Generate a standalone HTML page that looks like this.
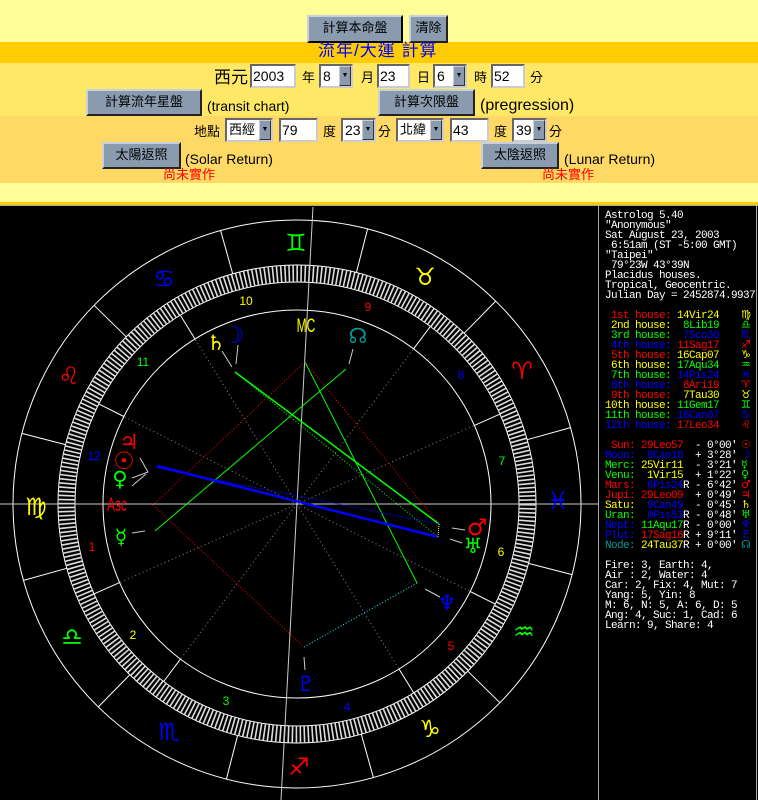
<!DOCTYPE html>
<html><head><meta charset="utf-8">
<style>
*{margin:0;padding:0;box-sizing:border-box}
body{width:758px;height:800px;overflow:hidden;background:#000;position:relative;font-family:"Liberation Sans","Noto Sans CJK TC",sans-serif;font-size:13px;color:#000}
.a{position:absolute}
.btn{position:absolute;background:#8a9bb0;border:2px solid;border-color:#c8d0dc #222 #222 #c8d0dc;font-size:13px;text-align:center;color:#000}
.inp{position:absolute;background:#fff;border:2px solid;border-color:#666 #ccc #ccc #666;font-size:14px;padding-left:1px;line-height:20px;height:24px}
.sel{position:absolute;background:#fff;border:2px solid;border-color:#666 #ccc #ccc #666;font-size:14px;padding-left:2px;line-height:20px;height:24px}
.sel b{position:absolute;right:0;top:0;width:12px;height:20px;background:#8a9bb0;border:1px solid;border-color:#ccc #333 #333 #ccc;font-size:7px;line-height:18px;text-align:center;font-weight:normal}
.t{position:absolute;font-size:13px;line-height:16px}
#panel{position:absolute;left:598px;top:206px;width:159px;height:594px;background:#000;border-left:1px solid #aaa;border-right:1px solid #aaa;font-family:"Liberation Mono","DejaVu Sans Mono",monospace;font-size:11px;letter-spacing:-0.6px;line-height:10px;color:#fff}
#panel div{position:relative;height:10px;white-space:pre}
#panel i{font-style:normal;position:absolute;left:142px;top:-1px;font-family:"DejaVu Sans",sans-serif;font-size:11px;letter-spacing:0}
.r{color:#f00}.y{color:#ff0}.g{color:#0f0}.b{color:#0000ff}.c{color:#009999}.w{color:#fff}
</style></head><body>
<div class="a" style="left:0;top:0;width:758px;height:42px;background:#ffff99"></div>
<div class="a" style="left:0;top:42px;width:758px;height:21px;background:#ffcc00"></div>
<div class="a" style="left:0;top:63px;width:758px;height:53px;background:#ffe866"></div>
<div class="a" style="left:0;top:116px;width:758px;height:67px;background:#ffd966"></div>
<div class="a" style="left:0;top:183px;width:758px;height:19px;background:#ffff99"></div>
<div class="a" style="left:0;top:202px;width:758px;height:3px;background:#ffcc00"></div>
<div class="a" style="left:0;top:205px;width:758px;height:1px;background:#aaa"></div>

<div class="btn" style="left:307px;top:15px;width:96px;height:28px;line-height:22px;border-color:#c8d0dc #000 #000 #c8d0dc">計算本命盤</div>
<div class="btn" style="left:409px;top:15px;width:39px;height:28px;line-height:22px">清除</div>
<div class="t" style="left:318px;top:41px;font-size:17px;line-height:20px;letter-spacing:1px;color:#0000ff">流年/大運 計算</div>

<div class="t" style="left:214px;top:67px;font-size:17px;line-height:22px">西元</div>
<div class="inp" style="left:250px;top:64px;width:46px">2003</div>
<div class="t" style="left:302px;top:70px">年</div>
<div class="sel" style="left:319px;top:64px;width:34px">8<b>▼</b></div>
<div class="t" style="left:361px;top:70px">月</div>
<div class="inp" style="left:377px;top:64px;width:33px">23</div>
<div class="t" style="left:417px;top:70px">日</div>
<div class="sel" style="left:433px;top:64px;width:34px">6<b>▼</b></div>
<div class="t" style="left:474px;top:70px">時</div>
<div class="inp" style="left:491px;top:64px;width:34px">52</div>
<div class="t" style="left:530px;top:70px">分</div>

<div class="btn" style="left:86px;top:89px;width:116px;height:27px;line-height:21px">計算流年星盤</div>
<div class="t" style="left:207px;top:98px;font-size:14px">(transit chart)</div>
<div class="btn" style="left:378px;top:89px;width:97px;height:27px;line-height:21px">計算次限盤</div>
<div class="t" style="left:480px;top:96px;font-size:16px;line-height:19px">(pregression)</div>

<div class="t" style="left:194px;top:124px">地點</div>
<div class="sel" style="left:225px;top:118px;width:48px;font-size:13px">西經<b>▼</b></div>
<div class="inp" style="left:279px;top:118px;width:39px">79</div>
<div class="t" style="left:323px;top:124px">度</div>
<div class="sel" style="left:341px;top:118px;width:35px">23<b>▼</b></div>
<div class="t" style="left:378px;top:124px">分</div>
<div class="sel" style="left:396px;top:118px;width:48px;font-size:13px">北緯<b>▼</b></div>
<div class="inp" style="left:450px;top:118px;width:39px">43</div>
<div class="t" style="left:494px;top:124px">度</div>
<div class="sel" style="left:512px;top:118px;width:35px">39<b>▼</b></div>
<div class="t" style="left:549px;top:124px">分</div>

<div class="btn" style="left:102px;top:142px;width:79px;height:27px;line-height:21px">太陽返照</div>
<div class="t" style="left:185px;top:151px;font-size:14px">(Solar Return)</div>
<div class="t" style="left:163px;top:167px;color:#f00">尚未實作</div>
<div class="btn" style="left:481px;top:142px;width:78px;height:27px;line-height:21px">太陰返照</div>
<div class="t" style="left:564px;top:151px;font-size:14px">(Lunar Return)</div>
<div class="t" style="left:542px;top:167px;color:#f00">尚未實作</div>

<svg class="a" style="left:0;top:0" width="598" height="800" viewBox="0 0 598 800">
<rect x="0" y="206" width="598" height="594" fill="#000"/>
<g fill="none" stroke="#fff" stroke-width="1">
<circle cx="297" cy="504" r="284"/>
<circle cx="297" cy="504" r="239"/>
<circle cx="297" cy="504" r="222"/>
<circle cx="297" cy="504" r="194"/>
</g>
<circle cx="297" cy="504" r="230.5" fill="none" stroke="#ddd" stroke-width="17" stroke-dasharray="1.6 2.42"/>
<g stroke="#fff" stroke-width="1">
<line x1="527.2" y1="439.7" x2="570.5" y2="427.6"/>
<line x1="464.2" y1="333.2" x2="495.7" y2="301.1"/>
<line x1="356.4" y1="272.5" x2="367.6" y2="228.9"/>
<line x1="232.7" y1="273.8" x2="220.6" y2="230.5"/>
<line x1="126.2" y1="336.8" x2="94.1" y2="305.3"/>
<line x1="65.5" y1="444.6" x2="21.9" y2="433.4"/>
<line x1="66.8" y1="568.3" x2="23.5" y2="580.4"/>
<line x1="129.8" y1="674.8" x2="98.3" y2="706.9"/>
<line x1="237.6" y1="735.5" x2="226.4" y2="779.1"/>
<line x1="361.3" y1="734.2" x2="373.4" y2="777.5"/>
<line x1="467.8" y1="671.2" x2="499.9" y2="702.7"/>
<line x1="528.5" y1="563.4" x2="572.1" y2="574.6"/>
<line x1="119.6" y1="582.6" x2="94" y2="593.9"/>
<line x1="180.5" y1="659.1" x2="163.7" y2="681.5"/>
<line x1="399" y1="669" x2="413.7" y2="692.9"/>
<line x1="470.2" y1="591.5" x2="495.2" y2="604.1"/>
<line x1="474.4" y1="425.4" x2="500" y2="414.1"/>
<line x1="413.5" y1="348.9" x2="430.3" y2="326.5"/>
<line x1="195" y1="339" x2="180.3" y2="315.1"/>
<line x1="123.8" y1="416.5" x2="98.8" y2="403.9"/>
</g>
<g stroke="#888" stroke-width="1" stroke-dasharray="1 3">
<line x1="297" y1="504" x2="119.6" y2="582.6"/>
<line x1="297" y1="504" x2="180.5" y2="659.1"/>
<line x1="297" y1="504" x2="399" y2="669"/>
<line x1="297" y1="504" x2="470.2" y2="591.5"/>
<line x1="297" y1="504" x2="474.4" y2="425.4"/>
<line x1="297" y1="504" x2="413.5" y2="348.9"/>
<line x1="297" y1="504" x2="195" y2="339"/>
<line x1="297" y1="504" x2="123.8" y2="416.5"/>
</g>
<line x1="0" y1="504" x2="598" y2="504" stroke="#ccc"/>
<line x1="313" y1="207" x2="281" y2="800" stroke="#ccc"/>
<g fill="none" stroke-width="1">
<path d="M153 505 L305 362 L439 524" stroke="#f00" stroke-dasharray="1 2"/>
<path d="M153 505 L304 647" stroke="#f00" stroke-dasharray="1 2"/>
<path d="M305 362 L417 583" stroke="#0f0"/>
<path d="M346 369 L155 531" stroke="#0f0"/>
<path d="M235 372 L439 524" stroke="#0f0" stroke-width="1.5"/>
<path d="M235 372 L438 537" stroke="#0f0" stroke-dasharray="1 2"/>
<path d="M157 466 L438 537" stroke="#0000ff" stroke-width="2.5"/>
<path d="M157 468 L439 524" stroke="#0000ff" stroke-dasharray="1 1"/>
<path d="M304 647 L417 583" stroke="#0ff" stroke-dasharray="1 2"/>
<path d="M439 524 L438 537" stroke="#ff0" stroke-dasharray="1 1"/>
</g>
<g stroke="#ccc" stroke-width="1" fill="none">
<path d="M140 458 L148 472 L132 478"/>
<path d="M146 474 L132 486"/>
<path d="M132 533 L145 531"/>
<path d="M222 351 L232 367"/>
<path d="M238 345 L236 364"/>
<path d="M353 349 L349 364"/>
<path d="M452 528 L465 530"/>
<path d="M450 539 L462 543"/>
<path d="M425 589 L440 597"/>
<path d="M304 657 L305 670"/>
</g>
<g font-family="DejaVu Sans,sans-serif" font-size="24" text-anchor="middle" dominant-baseline="central">
<text x="522" y="371" fill="#f00">♈</text>
<text x="425" y="277" fill="#ff0">♉</text>
<text x="296" y="243" fill="#0f0">♊</text>
<text x="164" y="279" fill="#0000ff">♋</text>
<text x="69" y="376" fill="#f00">♌</text>
<text x="36" y="507" fill="#ff0">♍</text>
<text x="72" y="637" fill="#0f0">♎</text>
<text x="169" y="732" fill="#0000ff">♏</text>
<text x="299" y="767" fill="#f00">♐</text>
<text x="430" y="729" fill="#ff0">♑</text>
<text x="524" y="632" fill="#0f0">♒</text>
<text x="558" y="501" fill="#0000ff">♓</text>
</g>
<g font-family="Liberation Sans,sans-serif" font-size="12" text-anchor="middle" dominant-baseline="central">
<text x="92" y="547" fill="#f00">1</text>
<text x="133" y="635" fill="#ff0">2</text>
<text x="226" y="701" fill="#0f0">3</text>
<text x="347" y="707" fill="#0000ff">4</text>
<text x="451" y="646" fill="#f00">5</text>
<text x="501" y="552" fill="#ff0">6</text>
<text x="502" y="461" fill="#0f0">7</text>
<text x="461" y="375" fill="#0000ff">8</text>
<text x="368" y="307" fill="#f00">9</text>
<text x="246" y="301" fill="#ff0">10</text>
<text x="143" y="362" fill="#0f0">11</text>
<text x="94" y="456" fill="#0000ff">12</text>
</g>
<g font-family="DejaVu Sans,sans-serif" font-size="21" text-anchor="middle" dominant-baseline="central">
<text x="129" y="442" fill="#f00">♃</text>
<text x="124" y="461" fill="#f00" font-size="24">☉</text>
<text x="120" y="479" fill="#0f0">♀</text>
<text x="121" y="537" fill="#0f0">☿</text>
<text x="216" y="343" fill="#ff0">♄</text>
<text x="234" y="336" fill="#0000ff" font-size="23">☽</text>
<text x="358" y="336" fill="#009999">☊</text>
<text x="477" y="528" fill="#f00" font-size="23">♂</text>
<text x="473" y="546" fill="#0f0">♅</text>
<text x="447" y="603" fill="#0000ff">♆</text>
<text x="306" y="684" fill="#0000ff">♇</text>
</g>
<g font-family="Liberation Sans,sans-serif" font-size="15" text-anchor="middle" dominant-baseline="central">
<text x="117" y="505" fill="#f00" transform="translate(117 505) scale(0.8 1.3) translate(-117 -505)">Asc</text>
<text x="306" y="326" fill="#ff0" transform="translate(306 326) scale(0.8 1.3) translate(-306 -326)">MC</text>
</g>
</svg>

<div id="panel">
<div style="height:5px"></div>
<div> Astrolog 5.40</div>
<div> "Anonymous"</div>
<div> Sat August 23, 2003</div>
<div>  6:51am (ST -5:00 GMT)</div>
<div> "Taipei"</div>
<div>  79°23W 43°39N</div>
<div> Placidus houses.</div>
<div> Tropical, Geocentric.</div>
<div> Julian Day = 2452874.9937</div>
<div></div>
<div><span class="r">  1st house: </span><span class="y">14Vir24</span><i class="y">♍</i></div>
<div><span class="y">  2nd house: </span><span class="g"> 8Lib19</span><i class="g">♎</i></div>
<div><span class="g">  3rd house: </span><span class="b"> 7Sco30</span><i class="b">♏</i></div>
<div><span class="b">  4th house: </span><span class="r">11Sag17</span><i class="r">♐</i></div>
<div><span class="r">  5th house: </span><span class="y">16Cap07</span><i class="y">♑</i></div>
<div><span class="y">  6th house: </span><span class="g">17Aqu34</span><i class="g">♒</i></div>
<div><span class="g">  7th house: </span><span class="b">14Pis24</span><i class="b">♓</i></div>
<div><span class="b">  8th house: </span><span class="r"> 8Ari19</span><i class="r">♈</i></div>
<div><span class="r">  9th house: </span><span class="y"> 7Tau30</span><i class="y">♉</i></div>
<div><span class="y"> 10th house: </span><span class="g">11Gem17</span><i class="g">♊</i></div>
<div><span class="g"> 11th house: </span><span class="b">16Can07</span><i class="b">♋</i></div>
<div><span class="b"> 12th house: </span><span class="r">17Leo34</span><i class="r">♌</i></div>
<div></div>
<div><span class="r">  Sun: </span><span class="r">29Leo57</span>  - 0°00'<i class="r">☉</i></div>
<div><span class="b"> Moon: </span><span class="b"> 8Can18</span>  + 3°28'<i class="b">☽</i></div>
<div><span class="g"> Merc: </span><span class="y">25Vir11</span>  - 3°21'<i class="g">☿</i></div>
<div><span class="g"> Venu: </span><span class="y"> 1Vir15</span>  + 1°22'<i class="g">♀</i></div>
<div><span class="r"> Mars: </span><span class="b"> 6Pis24</span>R - 6°42'<i class="r">♂</i></div>
<div><span class="r"> Jupi: </span><span class="r">29Leo09</span>  + 0°49'<i class="r">♃</i></div>
<div><span class="y"> Satu: </span><span class="b"> 9Can49</span>  - 0°45'<i class="y">♄</i></div>
<div><span class="g"> Uran: </span><span class="b"> 0Pis53</span>R - 0°48'<i class="g">♅</i></div>
<div><span class="b"> Nept: </span><span class="g">11Aqu17</span>R - 0°00'<i class="b">♆</i></div>
<div><span class="b"> Plut: </span><span class="r">17Sag16</span>R + 9°11'<i class="b">♇</i></div>
<div><span class="c"> Node: </span><span class="y">24Tau37</span>R + 0°00'<i class="c">☊</i></div>
<div></div>
<div> Fire: 3, Earth: 4,</div>
<div> Air : 2, Water: 4</div>
<div> Car: 2, Fix: 4, Mut: 7</div>
<div> Yang: 5, Yin: 8</div>
<div> M: 6, N: 5, A: 6, D: 5</div>
<div> Ang: 4, Suc: 1, Cad: 6</div>
<div> Learn: 9, Share: 4</div>
</div>
</body></html>
